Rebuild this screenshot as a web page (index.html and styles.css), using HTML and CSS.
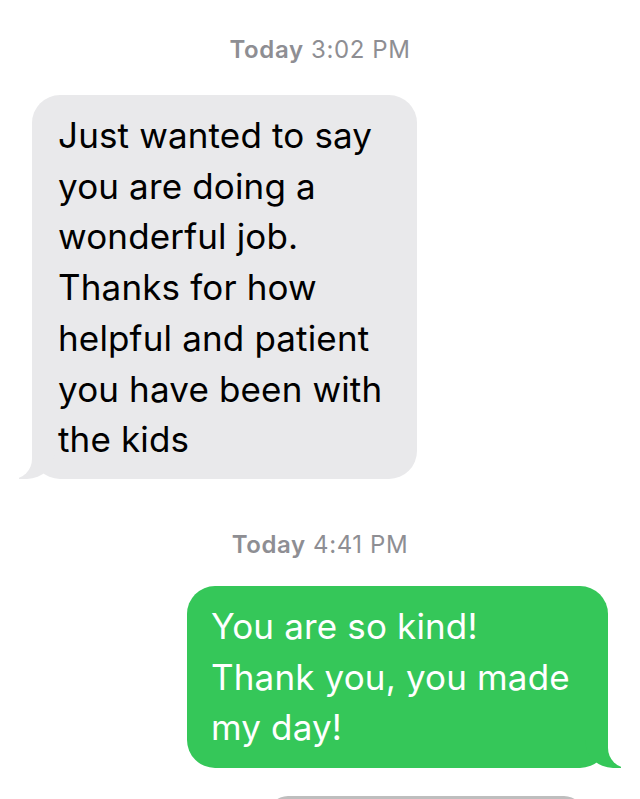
FILE: index.html
```html
<!doctype html>
<html>
	<head>
		<link rel="stylesheet" href="styles.css">
	</head>
	<body>
		<main class="chat">
			<!-- first message -->
			<p class="stamp"><b>Today</b> 3:02 PM</p>
			<div class="bubble them">
				Just wanted to say<br>
				you are doing a<br>
				wonderful job.<br>
				Thanks for how<br>
				helpful and patient<br>
				you have been with<br>
				the kids
			</div>

			<!-- reply -->
			<p class="stamp second"><b>Today</b> 4:41 PM</p>
			<div class="bubble me">
				You are so kind!<br>
				Thank you, you made<br>
				my day!
			</div>

			<!-- next bubble, cut off by the bottom edge -->
			<div class="bubble next"></div>
		</main>
	</body>
</html>
```

FILE: styles.css
```css
* {
	margin: 0px;
	padding: 0px;
}
html, body {
	height: 100%;
	overflow: hidden;
}
body {
	background: white;
	font-family: Inter, "Liberation Sans", sans-serif;
}
.chat {
	display: flex;
	flex-direction: column;
	padding-top: 37px;
}
/* date lines */
.stamp {
	align-self: center;
	font-size: 24px;
	line-height: 26px;
	color: #8e8e93;
	letter-spacing: 0.6px;
}
.stamp b {
	font-weight: 600;
}
.stamp.second {
	margin-top: 53px;
}
/* message bubbles */
.bubble {
	position: relative;
	font-size: 35px;
	line-height: 50.7px;
	letter-spacing: 0.15px;
	border-radius: 28px;
	box-sizing: border-box;
}
.them {
	align-self: flex-start;
	margin: 32px 0px 0px 32px;
	width: 385px;
	height: 384px;
	padding: 15px 0px 0px 26px;
	background: #e9e9eb;
	color: black;
}
.me {
	align-self: flex-end;
	margin: 28px 32px 0px 0px;
	width: 421px;
	height: 182px;
	padding: 15px 0px 0px 24px;
	background: #35c759;
	color: white;
}
/* tails */
.them::before, .them::after,
.me::before, .me::after {
	content: "";
	position: absolute;
	bottom: 0px;
	height: 36px;
}
.them::before {
	left: -13px;
	width: 36px;
	background: #e9e9eb;
	border-bottom-right-radius: 28px;
}
.them::after {
	left: -44px;
	width: 44px;
	background: white;
	border-bottom-right-radius: 20px;
}
.me::before {
	right: -13px;
	width: 36px;
	background: #35c759;
	border-bottom-left-radius: 28px;
}
.me::after {
	right: -44px;
	width: 44px;
	background: white;
	border-bottom-left-radius: 20px;
}
.next {
	align-self: flex-end;
	margin: 28px 56px 0px 0px;
	width: 316px;
	height: 40px;
	background: #bebebe;
	border-radius: 20px 20px 0px 0px;
}
```
